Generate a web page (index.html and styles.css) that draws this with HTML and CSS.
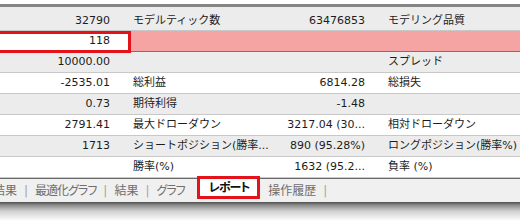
FILE: index.html
```html
<!DOCTYPE html>
<html lang="ja">
<head>
    <meta charset="UTF-8">
    <title>レポート</title>
    <link rel="stylesheet" href="styles.css">
</head>
<body>
    <div class="top"></div>

    <div class="report">
        <div class="row alt first">
            <div class="cell num">32790</div>
            <div class="cell">モデルティック数</div>
            <div class="cell num">63476853</div>
            <div class="cell">モデリング品質</div>
        </div>
        <div class="row sel">
            <div class="cell num boxed">118</div>
            <div class="cell"></div>
            <div class="cell num"></div>
            <div class="cell"></div>
        </div>
        <div class="row alt">
            <div class="cell num">10000.00</div>
            <div class="cell"></div>
            <div class="cell num"></div>
            <div class="cell">スプレッド</div>
        </div>
        <div class="row">
            <div class="cell num">-2535.01</div>
            <div class="cell">総利益</div>
            <div class="cell num">6814.28</div>
            <div class="cell">総損失</div>
        </div>
        <div class="row alt">
            <div class="cell num">0.73</div>
            <div class="cell">期待利得</div>
            <div class="cell num">-1.48</div>
            <div class="cell"></div>
        </div>
        <div class="row">
            <div class="cell num">2791.41</div>
            <div class="cell">最大ドローダウン</div>
            <div class="cell num">3217.04 (30...</div>
            <div class="cell">相対ドローダウン</div>
        </div>
        <div class="row alt">
            <div class="cell num">1713</div>
            <div class="cell">ショートポジション(勝率...</div>
            <div class="cell num">890 (95.28%)</div>
            <div class="cell">ロングポジション(勝率%)</div>
        </div>
        <div class="row">
            <div class="cell num"></div>
            <div class="cell">勝率(%)</div>
            <div class="cell num">1632 (95.2...</div>
            <div class="cell">負率 (%)</div>
        </div>
    </div>

    <div class="tabs">
        <span class="tab first-tab">結果</span>
        <span class="sep">|</span>
        <span class="tab kana">最適化グラフ</span>
        <span class="sep">|</span>
        <span class="tab">結果</span>
        <span class="sep">|</span>
        <span class="tab kana">グラフ</span>
        <span class="tab active">レポート</span>
        <span class="tab after-active">操作履歴</span>
        <span class="sep">|</span>
    </div>
    <div class="shadow"></div>
</body>
</html>
```

FILE: styles.css
```css
body {
    margin: 0;
    width: 520px;
    height: 224px;
    overflow: hidden;
    background-color: #fff;
    font-family: "DejaVu Sans", "Noto Sans CJK JP", sans-serif;
    font-size: 11px;
    color: #1c1c1c;
}
.top {
    height: 4px;
    border-bottom: 3px solid #858585;
}
.row {
    display: grid;
    grid-template-columns: 130px 142px 113px 1fr;
    height: 20px;
    background-color: #fff;
    border-bottom: 1px solid #c8c8c8;
}
.row.alt {
    background-color: #ececec;
}
.row.first {
    height: 18px;
    padding-top: 5px;
}
.cell {
    position: relative;
    padding: 0 2px 0 3px;
    line-height: 20px;
    white-space: nowrap;
    overflow: hidden;
}
.row.first .cell {
    line-height: 18px;
}
.num {
    text-align: right;
    padding-right: 20px;
}
.row.sel {
    background-color: #f5a3a3;
    border-bottom-color: #2a86dc;
}
.row.sel .boxed {
    background-color: #fff;
    overflow: visible;
}
.boxed::after {
    content: "";
    position: absolute;
    left: -6px;
    right: -1px;
    top: 0;
    bottom: -2px;
    border: 3px solid #e4121b;
}
.tabs {
    display: flex;
    align-items: center;
    height: 23px;
    background-color: #f0f0f0;
    border-top: 1px solid #6a6a6a;
    font-size: 12px;
    color: #6e6e6e;
    font-feature-settings: "palt";
    white-space: nowrap;
}
.tab {
    line-height: 18px;
}
.tab.kana {
    letter-spacing: -1px;
}
.first-tab {
    margin-left: -7px;
}
.sep {
    margin: 0 7px;
    color: #a3a3a3;
}
.tab.active {
    align-self: flex-start;
    box-sizing: border-box;
    height: 23px;
    margin: -3px 0 0 12px;
    padding: 1px 8px 0 9px;
    background-color: #fff;
    border: 3px solid #e4121b;
    color: #111;
    font-weight: bold;
    letter-spacing: -1px;
    line-height: 16px;
}
.after-active {
    margin-left: 8px;
}
.shadow {
    height: 22px;
    background: linear-gradient(to bottom, #4e4e4e 0, #8a8a8a 3px, #cfcfcf 9px, #fff 19px);
}
```
